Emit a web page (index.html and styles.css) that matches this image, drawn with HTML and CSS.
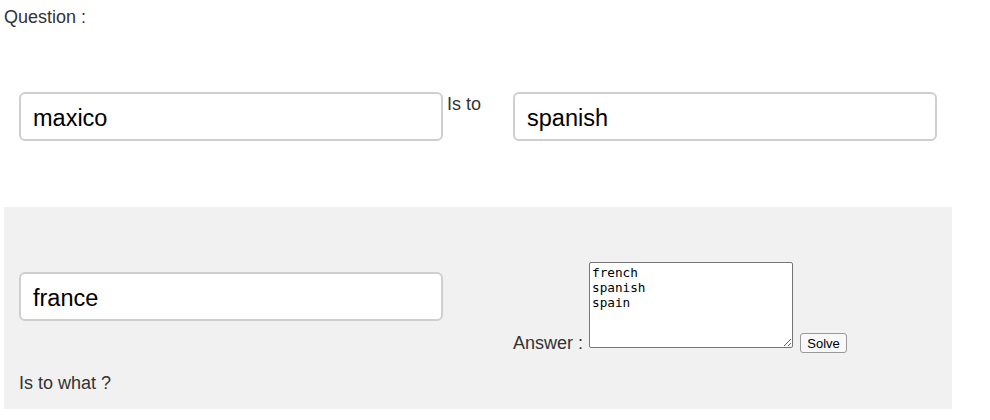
FILE: index.html
```html
<!DOCTYPE html>
<html>
<head>
<meta charset="utf-8">
<link rel="stylesheet" href="styles.css">
</head>
<body>
<div class="question">Question :</div>
<div class="row-top">
  <input class="field" type="text" value="maxico">
  <div class="is-to">Is to</div>
  <input class="field" type="text" value="spanish">
</div>
<div class="panel">
  <div class="col-left">
    <input class="field" type="text" value="france">
    <div class="is-to-what">Is to what ?</div>
  </div>
  <div class="col-right">
    <span class="answer-label">Answer :</span>
    <textarea class="answer">french
spanish
spain</textarea>
    <button class="solve">Solve</button>
  </div>
</div>
</body>
</html>
```

FILE: styles.css
```css
body {
  margin: 0;
  font-family: "Liberation Sans", Arial, sans-serif;
  font-size: 18px;
  line-height: 21px;
  color: #333;
  background: #fff;
}

.question {
  padding: 7px 4px 0;
}

.row-top {
  display: flex;
  align-items: flex-start;
  margin-top: 64px;
  padding-left: 19px;
}

.field {
  box-sizing: border-box;
  width: 424px;
  height: 49px;
  margin: 0;
  padding: 4px 12px 0;
  border: 2px solid #cfcfcf;
  border-radius: 6px;
  background: #fff;
  font-family: "Liberation Sans", Arial, sans-serif;
  font-size: 23.5px;
  color: #000;
  outline: none;
}

.is-to {
  box-sizing: border-box;
  width: 70px;
  padding-left: 4px;
  padding-top: 2px;
}

.panel {
  display: flex;
  margin: 66px 0 0 4px;
  width: 948px;
  background: #f1f1f1;
  padding-left: 15px;
  box-sizing: border-box;
}

.col-left {
  width: 424px;
  padding-top: 65px;
  padding-bottom: 15px;
}

.is-to-what {
  margin-top: 52px;
}

.col-right {
  margin-left: 70px;
  padding-top: 55px;
  display: flex;
  align-items: flex-end;
  align-self: flex-start;
}

.answer-label {
  margin-bottom: -1px;
}

.answer {
  box-sizing: border-box;
  width: 204px;
  height: 86px;
  margin: 0 0 5px 6px;
  padding: 2px;
  border: 1px solid #767676;
  border-radius: 2px;
  font-family: "DejaVu Sans Mono", monospace;
  font-size: 12.7px;
  line-height: 15px;
  color: #000;
  background: #fff;
  resize: both;
}

.solve {
  box-sizing: border-box;
  width: 47px;
  height: 20px;
  margin: 0 0 0 7px;
  padding: 0;
  border: 1px solid #999;
  border-radius: 3px;
  background: #f8f8f8;
  font-family: "Liberation Sans", Arial, sans-serif;
  font-size: 13px;
  color: #000;
}
```
